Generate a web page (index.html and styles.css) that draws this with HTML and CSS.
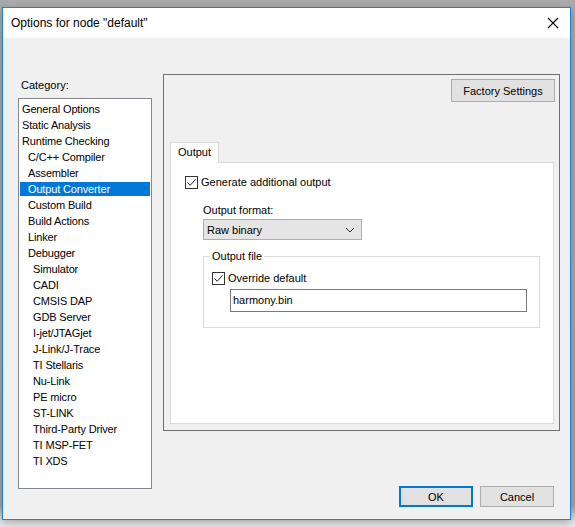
FILE: index.html
```html
<!DOCTYPE html>
<html lang="en">
<head>
    <meta charset="UTF-8">
    <title>Options for node "default"</title>
    <link rel="stylesheet" href="styles.css">
</head>
<body>
    <div class="window">
        <div class="title-bar">
            <span class="title">Options for node "default"</span>
            <svg class="close" width="12" height="12" viewBox="0 0 12 12">
                <path d="M1 1 L11 11 M11 1 L1 11" stroke="#000" stroke-width="1.1" fill="none"/>
            </svg>
        </div>

        <div class="main">
            <div class="category-col">
                <div class="category-label">Category:</div>
                <ul class="category-list">
                    <li class="lvl1">General Options</li>
                    <li class="lvl1">Static Analysis</li>
                    <li class="lvl1">Runtime Checking</li>
                    <li class="lvl2">C/C++ Compiler</li>
                    <li class="lvl2">Assembler</li>
                    <li class="lvl2 selected">Output Converter</li>
                    <li class="lvl2">Custom Build</li>
                    <li class="lvl2">Build Actions</li>
                    <li class="lvl2">Linker</li>
                    <li class="lvl2">Debugger</li>
                    <li class="lvl3">Simulator</li>
                    <li class="lvl3">CADI</li>
                    <li class="lvl3">CMSIS DAP</li>
                    <li class="lvl3">GDB Server</li>
                    <li class="lvl3">I-jet/JTAGjet</li>
                    <li class="lvl3">J-Link/J-Trace</li>
                    <li class="lvl3">TI Stellaris</li>
                    <li class="lvl3">Nu-Link</li>
                    <li class="lvl3">PE micro</li>
                    <li class="lvl3">ST-LINK</li>
                    <li class="lvl3">Third-Party Driver</li>
                    <li class="lvl3">TI MSP-FET</li>
                    <li class="lvl3">TI XDS</li>
                </ul>
            </div>

            <div class="options-col">
                <div class="panel">
                    <div class="panel-top">
                        <button class="btn factory-btn">Factory Settings</button>
                    </div>
                    <div class="tabs">
                        <div class="tab active">Output</div>
                    </div>
                    <div class="tab-page">
                        <label class="check-row">
                            <span class="checkbox checked">
                                <svg width="11" height="11" viewBox="0 0 11 11"><path d="M1.5 5.5 L4.2 8.3 L9.6 2.2" stroke="#222" stroke-width="1" fill="none"/></svg>
                            </span>
                            <span>Generate additional output</span>
                        </label>

                        <div class="format-block">
                            <div class="field-label">Output format:</div>
                            <div class="combo">
                                <span>Raw binary</span>
                                <svg width="10" height="6" viewBox="0 0 10 6"><path d="M1 1 L5 5 L9 1" stroke="#333" stroke-width="1" fill="none"/></svg>
                            </div>
                        </div>

                        <fieldset class="group">
                            <legend>Output file</legend>
                            <label class="check-row">
                                <span class="checkbox checked">
                                    <svg width="11" height="11" viewBox="0 0 11 11"><path d="M1.5 5.5 L4.2 8.3 L9.6 2.2" stroke="#222" stroke-width="1" fill="none"/></svg>
                                </span>
                                <span>Override default</span>
                            </label>
                            <div class="text-input">harmony.bin</div>
                        </fieldset>
                    </div>
                </div>

                <div class="dialog-buttons">
                    <button class="btn default-btn">OK</button>
                    <button class="btn">Cancel</button>
                </div>
            </div>
        </div>
    </div>
</body>
</html>
```

FILE: styles.css
```css
* {
    margin: 0;
    padding: 0;
    box-sizing: border-box;
}

body {
    width: 575px;
    height: 527px;
    overflow: hidden;
    background: linear-gradient(#a9a9a9 0, #a4a4a4 505px, #e8e8e8 522px);
    font-family: "Liberation Sans", Arial, sans-serif;
    font-size: 11px;
    color: #000;
}

.window {
    margin: 7px 0 0 2px;
    width: 569px;
    height: 513px;
    border: 1px solid #1883d7;
    background: #f0f0f0;
    box-shadow: 0 3px 8px rgba(0, 0, 0, 0.25);
    display: flex;
    flex-direction: column;
}

.title-bar {
    height: 30px;
    background: #fff;
    display: flex;
    align-items: center;
    justify-content: space-between;
    padding: 0 11px 0 8px;
}

.title {
    font-size: 12px;
}

.main {
    display: flex;
    padding: 36px 0 0 15px;
}

.category-col {
    width: 134px;
    padding-top: 5px;
}

.category-label {
    line-height: 13px;
    margin-bottom: 6px;
    padding-left: 3px;
}

.category-list {
    list-style: none;
    height: 391px;
    background: #fff;
    border: 1px solid #828790;
    padding: 1px 1px;
}

.category-list li {
    height: 16px;
    padding-top: 2px;
    line-height: 14px;
    white-space: nowrap;
    letter-spacing: -0.15px;
}

.category-list .lvl1 { padding-left: 2px; }
.category-list .lvl2 { padding-left: 8px; }
.category-list .lvl3 { padding-left: 13px; }

.category-list .selected {
    background: #0078d7;
    background-clip: content-box;
    color: #fff;
    padding-left: 0;
    text-indent: 8px;
}

.options-col {
    width: 397px;
    margin-left: 11px;
}

.panel {
    height: 357px;
    border: 1px solid #6e6e6e;
    padding: 4px 4px 6px 6px;
}

.panel-top {
    display: flex;
    justify-content: flex-end;
    margin-bottom: 40px;
}

.btn {
    height: 21px;
    width: 74px;
    background: #e1e1e1;
    border: 1px solid #adadad;
    font-family: inherit;
    font-size: 11px;
    color: #000;
}

.factory-btn {
    width: 104px;
    height: 23px;
}

.tabs {
    display: flex;
}

.tab {
    height: 21px;
    width: 49px;
    margin-bottom: -1px;
    padding: 3px 0 0 7px;
    background: #fff;
    border: 1px solid #d9d9d9;
    border-bottom: none;
    position: relative;
    z-index: 1;
}

.tab-page {
    height: 262px;
    margin-right: 1px;
    background: #fff;
    border: 1px solid #d9d9d9;
    padding: 13px 0 0 14px;
}

.check-row {
    display: flex;
    align-items: center;
    height: 13px;
    line-height: 13px;
}

.checkbox {
    width: 13px;
    height: 13px;
    border: 1px solid #333;
    background: #fff;
    display: flex;
    align-items: center;
    justify-content: center;
    margin-right: 3px;
}

.format-block {
    margin: 15px 0 0 18px;
}

.field-label {
    line-height: 13px;
    margin-bottom: 2px;
}

.combo {
    width: 159px;
    height: 21px;
    background: #e5e5e5;
    border: 1px solid #adadad;
    display: flex;
    align-items: center;
    justify-content: space-between;
    padding: 0 6px 0 3px;
}

.group {
    width: 337px;
    margin: 10px 0 0 18px;
    border: 1px solid #dcdcdc;
    padding: 0 0 15px 8px;
}

.group legend {
    line-height: 13px;
    padding: 0 2px;
    margin-left: -2px;
}

.group .check-row {
    margin-top: 9px;
}

.text-input {
    width: 297px;
    height: 23px;
    margin: 4px 0 0 18px;
    background: #fff;
    border: 1px solid #7a7a7a;
    line-height: 21px;
    padding: 0 2px;
}

.dialog-buttons {
    display: flex;
    justify-content: flex-end;
    gap: 7px;
    margin-top: 55px;
    padding-right: 6px;
}

.default-btn {
    border: 2px solid #0078d7;
}
```
